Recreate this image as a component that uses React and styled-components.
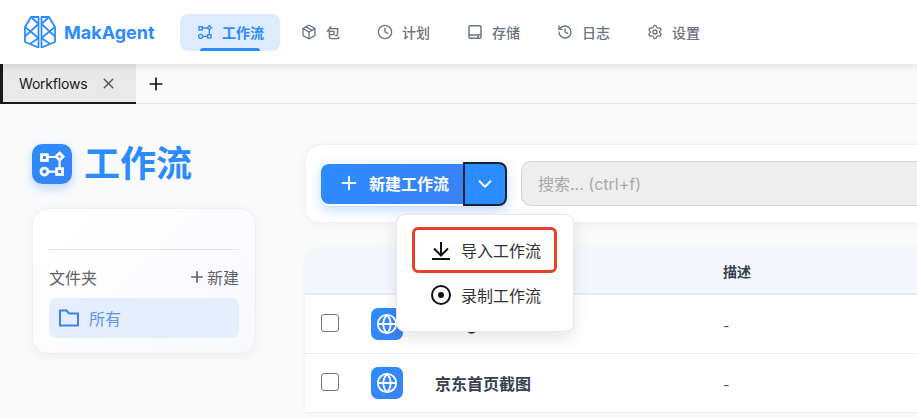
import React from "react";
import styled, { createGlobalStyle } from "styled-components";
import { ChevronDown, Clock, Globe, History, Package, Plus, Settings, X } from "lucide-react";

const GlobalStyle = createGlobalStyle`
  html, body {
    margin: 0;
    padding: 0;
    height: 100%;
    overflow: hidden;
    background: #fafafa;
    font-family: Inter, "Noto Sans CJK SC", sans-serif;
  }
  * {
    box-sizing: border-box;
  }
`;

const Page = styled.div`
  width: 917px;
  height: 417px;
  overflow: hidden;
  display: flex;
  flex-direction: column;
`;

const Header = styled.header`
  position: relative;
  z-index: 2;
  flex: none;
  height: 64px;
  display: flex;
  align-items: center;
  gap: 24px;
  padding-left: 24px;
  background: #fff;
  box-shadow: 0 2px 8px rgba(0, 0, 0, 0.12);
`;

const Brand = styled.div`
  display: flex;
  align-items: center;
  gap: 8px;
  width: 132px;
  font-size: 18px;
  font-weight: 700;
  color: #2b8cff;
`;

const Nav = styled.nav`
  display: flex;
  align-items: center;
  gap: 4px;
`;

const NavItem = styled.div`
  position: relative;
  height: 37px;
  display: flex;
  align-items: center;
  gap: 9px;
  padding: 0 16px 0 17px;
  border-radius: 8px;
  font-size: 14px;
  font-weight: ${(p) => (p.$active ? 600 : 500)};
  color: ${(p) => (p.$active ? "#2b8cff" : "#6b7280")};
  background: ${(p) => (p.$active ? "#deebff" : "transparent")};
  ${(p) =>
    p.$active &&
    `&::after {
      content: "";
      position: absolute;
      left: 20px;
      right: 20px;
      bottom: 0;
      height: 3px;
      border-radius: 3px 3px 0 0;
      background: #2b8cff;
    }`}
`;

const TabBar = styled.div`
  flex: none;
  height: 40px;
  display: flex;
  align-items: stretch;
  border-bottom: 1px solid #e5e5e5;
`;

const Tab = styled.div`
  width: 136px;
  display: flex;
  align-items: center;
  gap: 13px;
  padding-left: 16px;
  background: #e9e9e9;
  border-left: 3px solid #1a1a1a;
  border-bottom: 2px solid #1a1a1a;
  font-size: 14px;
  letter-spacing: -0.2px;
  color: #1a1a1a;
  margin-bottom: -1px;
`;

const AddTab = styled.div`
  display: flex;
  align-items: center;
  padding-left: 10px;
  color: #111;
`;

const Body = styled.div`
  flex: 1;
  display: flex;
  min-height: 0;
`;

const Aside = styled.aside`
  flex: none;
  width: 305px;
  padding: 40px 49px 0 32px;
`;

const TitleRow = styled.div`
  display: flex;
  align-items: center;
  gap: 12px;
  height: 40px;
`;

const TitleBadge = styled.div`
  width: 40px;
  height: 40px;
  border-radius: 10px;
  display: flex;
  align-items: center;
  justify-content: center;
  color: #fff;
  background: linear-gradient(135deg, #2b8cff, #3b82f6);
  box-shadow: 0 4px 10px rgba(43, 140, 255, 0.3);
`;

const Title = styled.h1`
  margin: 0;
  font-size: 36px;
  line-height: 40px;
  font-weight: 700;
  color: #2b8cff;
`;

const FolderCard = styled.div`
  margin-top: 24px;
  height: 146px;
  padding: 40px 16px 0;
  border-radius: 16px;
  border: 1px solid #f0f0f0;
  background: linear-gradient(135deg, #fff, #f8f9fc);
  box-shadow: 0 2px 10px rgba(0, 0, 0, 0.05);
`;

const Divider = styled.div`
  height: 1px;
  background: #e2e4e8;
`;

const FolderHead = styled.div`
  margin-top: 16px;
  display: flex;
  justify-content: space-between;
  align-items: center;
  height: 22px;
  font-size: 16px;
  color: #5f6368;
`;

const NewFolder = styled.span`
  display: flex;
  align-items: center;
  gap: 1px;
`;

const FolderRow = styled.div`
  margin-top: 10px;
  height: 40px;
  display: flex;
  align-items: center;
  gap: 9px;
  padding: 0 0 1px 9px;
  border-radius: 8px;
  background: #e5eefc;
  font-size: 16px;
  color: #5b95f5;
`;

const Main = styled.main`
  position: relative;
  flex: none;
  width: 700px;
  padding-top: 40px;
`;

const Toolbar = styled.div`
  height: 79px;
  display: flex;
  align-items: center;
  padding-left: 15px;
  border-radius: 16px 0 0 16px;
  border: 1px solid #f2f2f2;
  background: #fff;
  box-shadow: 0 2px 10px rgba(0, 0, 0, 0.04);
`;

const SplitButton = styled.div`
  display: flex;
  align-items: center;
  box-shadow: 0 4px 12px rgba(43, 140, 255, 0.3);
  border-radius: 8px;
`;

const PrimaryButton = styled.div`
  width: 142px;
  height: 40px;
  display: flex;
  align-items: center;
  gap: 9px;
  padding: 0 0 1px 17px;
  border-radius: 8px 0 0 8px;
  font-size: 16px;
  font-weight: 700;
  color: #fff;
  background: linear-gradient(135deg, #2b8cff, #3b82f6);
`;

const CaretButton = styled.div`
  width: 44px;
  height: 44px;
  display: flex;
  align-items: center;
  justify-content: center;
  color: #fff;
  background: #2b8cff;
  border: 2px solid #1a2233;
  border-radius: 0 8px 8px 0;
`;

const Search = styled.div`
  margin-left: 14px;
  flex: 1;
  height: 45px;
  display: flex;
  align-items: center;
  padding: 0 0 1px 16px;
  border: 1px solid #d4d4d4;
  border-right: 0;
  border-radius: 10px 0 0 10px;
  background: #eeeeef;
  font-size: 16px;
  color: #a8a8a8;
`;

const Table = styled.div`
  margin-top: 26px;
  border-radius: 16px 0 0 0;
  background: #fff;
  box-shadow: 0 0 6px rgba(0, 0, 0, 0.04);
`;

const TableHead = styled.div`
  height: 46px;
  display: grid;
  grid-template-columns: 418px 1fr;
  align-items: center;
  border-radius: 16px 0 0 0;
  border-bottom: 2px solid #e2eefd;
  background: #f4f8fe;
  font-size: 14px;
  font-weight: 700;
  color: #374151;
`;

const HeadCell = styled.div`
  grid-column: 2;
`;

const Row = styled.div`
  height: 59px;
  display: grid;
  grid-template-columns: 66px 64px 288px 1fr;
  align-items: center;
  border-bottom: 1px solid #ececec;
`;

const Checkbox = styled.div`
  margin: 0 0 3px 16px;
  width: 18px;
  height: 18px;
  border: 1px solid #767676;
  border-radius: 3px;
  background: #fff;
`;

const RowBadge = styled.div`
  width: 32px;
  height: 32px;
  border-radius: 7px;
  display: flex;
  align-items: center;
  justify-content: center;
  color: #fff;
  background: linear-gradient(135deg, #2b8cff, #3b82f6);
`;

const RowName = styled.div`
  font-size: 16px;
  font-weight: 700;
  color: #374151;
`;

const RowDesc = styled.div`
  padding-top: 2px;
  font-size: 14px;
  color: #4b5563;
`;

const Menu = styled.div`
  position: absolute;
  z-index: 3;
  left: 91px;
  top: 110px;
  width: 178px;
  height: 118px;
  padding: 12px 16px 0 15px;
  border-radius: 9px;
  border: 1px solid #e8e8e8;
  background: #fff;
  box-shadow: 0 6px 16px rgba(0, 0, 0, 0.1);
`;

const MenuItem = styled.div`
  height: ${(p) => (p.$marked ? "46px" : "44px")};
  display: flex;
  align-items: center;
  gap: 9px;
  padding-left: 18px;
  font-size: 16px;
  color: #333;
  border-radius: 6px;
  outline: ${(p) => (p.$marked ? "3px solid #e8402a" : "none")};
  outline-offset: -3px;
`;

const FlowIcon = ({ size, weight = 2, linkWeight = 2 }) => (
  <svg width={size} height={size} viewBox="0 0 24 24" fill="none" stroke="currentColor" strokeWidth={weight}>
    <rect x="3" y="4" width="5" height="5" />
    <path d="M18.500 2.500l3 3-3 3-3-3z" />
    <circle cx="5.500" cy="18.500" r="3" />
    <rect x="16" y="16" width="5" height="5" />
    <path strokeWidth={linkWeight} d="M8 6h7.500M18.500 8.500V16M8.500 18.500H16" />
  </svg>
);

const StorageIcon = () => (
  <svg width="16" height="16" viewBox="0 0 24 24" fill="none" stroke="currentColor" strokeWidth="2.200">
    <rect x="3" y="2.500" width="18" height="19" rx="1.500" />
    <path d="M3 16.500h18M15 19h3" />
  </svg>
);

const LogoMark = () => (
  <svg width="32" height="32" viewBox="0 0 32 32" fill="none" stroke="#2b8cff" strokeWidth="1.800" strokeLinejoin="round">
    <path d="M14.500 1H7L1 11v15l13.500 5.500z" />
    <path d="M17.500 1H25l6 10v15l-13.500 5.500z" />
    <path d="M1 11l13.500 11M14.500 8L1 20.500M7 1l7.500 7M6 28l8.500-6" />
    <path d="M31 11L17.500 22M17.500 8L31 20.500M25 1l-7.500 7M26 28l-8.500-6" />
  </svg>
);

const FolderGlyph = () => (
  <svg width="22" height="22" viewBox="0 0 22 22" fill="none" stroke="#3b82f6" strokeWidth="2">
    <path d="M2 3.500h6.500l2.500 3h9v12H2z" />
  </svg>
);

const ImportIcon = () => (
  <svg width="22" height="22" viewBox="0 0 22 22" fill="none" stroke="#111" strokeWidth="2">
    <path d="M11 3v13M4 9.500l7 7 7-7" />
    <path d="M2 20h18" />
  </svg>
);

const RecordIcon = () => (
  <svg width="22" height="22" viewBox="0 0 22 22" fill="none">
    <circle cx="11" cy="11" r="9" stroke="#111" strokeWidth="2" />
    <circle cx="11" cy="11" r="3" fill="#111" />
  </svg>
);

const navItems = [
  { label: "包", icon: <Package size={16} /> },
  { label: "计划", icon: <Clock size={16} /> },
  { label: "存储", icon: <StorageIcon /> },
  { label: "日志", icon: <History size={16} /> },
  { label: "设置", icon: <Settings size={16} /> },
];

const rows = [
  { id: 1, name: "Google" },
  { id: 2, name: "京东首页截图" },
];

export default function App() {
  return (
    <Page>
      <GlobalStyle />
      <Header>
        <Brand>
          <LogoMark />
          MakAgent
        </Brand>
        <Nav>
          <NavItem $active>
            <FlowIcon size={16} />
            工作流
          </NavItem>
          {navItems.map((item) => (
            <NavItem key={item.label}>
              {item.icon}
              {item.label}
            </NavItem>
          ))}
        </Nav>
      </Header>
      <TabBar>
        <Tab>
          Workflows
          <X size={17} color="#555" />
        </Tab>
        <AddTab>
          <Plus size={20} />
        </AddTab>
      </TabBar>
      <Body>
        <Aside>
          <TitleRow>
            <TitleBadge>
              <FlowIcon size={28} weight={2.400} linkWeight={1.800} />
            </TitleBadge>
            <Title>工作流</Title>
          </TitleRow>
          <FolderCard>
            <Divider />
            <FolderHead>
              文件夹
              <NewFolder>
                <Plus size={18} strokeWidth={2.200} />
                新建
              </NewFolder>
            </FolderHead>
            <FolderRow>
              <FolderGlyph />
              所有
            </FolderRow>
          </FolderCard>
        </Aside>
        <Main>
          <Toolbar>
            <SplitButton>
              <PrimaryButton>
                <Plus size={22} />
                新建工作流
              </PrimaryButton>
              <CaretButton>
                <ChevronDown size={22} />
              </CaretButton>
            </SplitButton>
            <Search>搜索... (ctrl+f)</Search>
          </Toolbar>
          <Table>
            <TableHead>
              <HeadCell>描述</HeadCell>
            </TableHead>
            {rows.map((row) => (
              <Row key={row.id}>
                <Checkbox />
                <RowBadge>
                  <Globe size={22} />
                </RowBadge>
                <RowName>{row.name}</RowName>
                <RowDesc>-</RowDesc>
              </Row>
            ))}
          </Table>
          <Menu>
            <MenuItem $marked>
              <ImportIcon />
              导入工作流
            </MenuItem>
            <MenuItem>
              <RecordIcon />
              录制工作流
            </MenuItem>
          </Menu>
        </Main>
      </Body>
    </Page>
  );
}
